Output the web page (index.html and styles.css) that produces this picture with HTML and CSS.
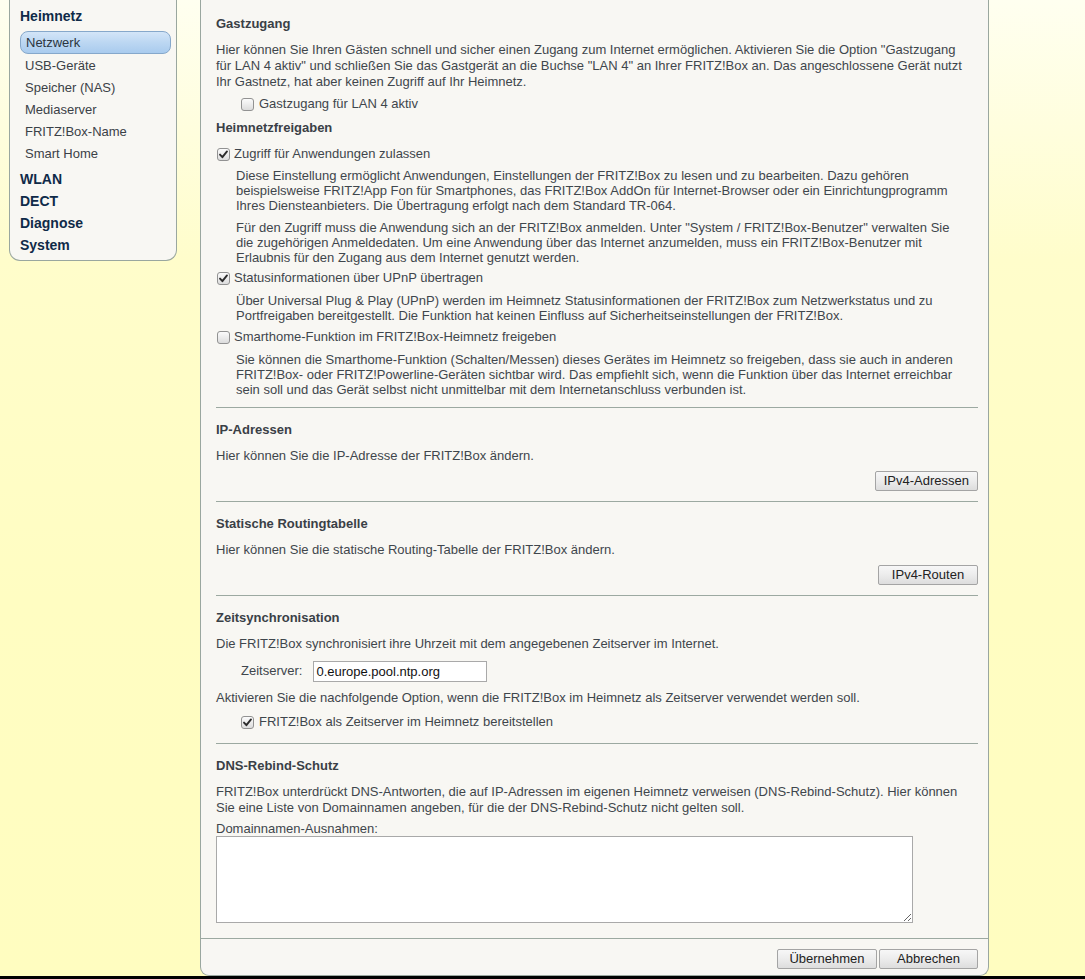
FILE: index.html
```html
<!DOCTYPE html>
<html lang="de">
<head>
<meta charset="utf-8">
<title>Heimnetz – Netzwerk</title>
<link rel="stylesheet" href="styles.css">
</head>
<body>
<div class="page">
  <nav class="sidebar">
    <div class="nav-top">Heimnetz</div>
    <ul class="nav-sub">
      <li class="active">Netzwerk</li>
      <li>USB-Geräte</li>
      <li>Speicher (NAS)</li>
      <li>Mediaserver</li>
      <li>FRITZ!Box-Name</li>
      <li>Smart Home</li>
    </ul>
    <div class="nav-top">WLAN</div>
    <div class="nav-top">DECT</div>
    <div class="nav-top">Diagnose</div>
    <div class="nav-top">System</div>
  </nav>

  <main class="main">
    <div class="content">
      <section class="sec first">
        <h2>Gastzugang</h2>
        <p class="txt">Hier können Sie Ihren Gästen schnell und sicher einen Zugang zum Internet ermöglichen. Aktivieren Sie die Option "Gastzugang für LAN 4 aktiv" und schließen Sie das Gastgerät an die Buchse "LAN 4" an Ihrer FRITZ!Box an. Das angeschlossene Gerät nutzt Ihr Gastnetz, hat aber keinen Zugriff auf Ihr Heimnetz.</p>
        <label class="cb-row indent gap6"><span class="cb"></span>Gastzugang für LAN 4 aktiv</label>

        <h2 class="h-sub">Heimnetzfreigaben</h2>
        <label class="cb-row gap10"><span class="cb"><svg viewBox="0 0 13 13" width="13" height="13"><path d="M3 6.6 L5.4 9.2 L10 3.4" fill="none" stroke="#2b2b2b" stroke-width="1.9" stroke-linecap="round" stroke-linejoin="round"/></svg></span>Zugriff für Anwendungen zulassen</label>
        <p class="itxt gap6">Diese Einstellung ermöglicht Anwendungen, Einstellungen der FRITZ!Box zu lesen und zu bearbeiten. Dazu gehören beispielsweise FRITZ!App Fon für Smartphones, das FRITZ!Box AddOn für Internet-Browser oder ein Einrichtungprogramm Ihres Diensteanbieters. Die Übertragung erfolgt nach dem Standard TR-064.</p>
        <p class="itxt gap7">Für den Zugriff muss die Anwendung sich an der FRITZ!Box anmelden. Unter "System / FRITZ!Box-Benutzer" verwalten Sie die zugehörigen Anmeldedaten. Um eine Anwendung über das Internet anzumelden, muss ein FRITZ!Box-Benutzer mit Erlaubnis für den Zugang aus dem Internet genutzt werden.</p>
        <label class="cb-row gap5"><span class="cb"><svg viewBox="0 0 13 13" width="13" height="13"><path d="M3 6.6 L5.4 9.2 L10 3.4" fill="none" stroke="#2b2b2b" stroke-width="1.9" stroke-linecap="round" stroke-linejoin="round"/></svg></span>Statusinformationen über UPnP übertragen</label>
        <p class="itxt gap7">Über Universal Plug &amp; Play (UPnP) werden im Heimnetz Statusinformationen der FRITZ!Box zum Netzwerkstatus und zu Portfreigaben bereitgestellt. Die Funktion hat keinen Einfluss auf Sicherheitseinstellungen der FRITZ!Box.</p>
        <label class="cb-row gap6"><span class="cb"></span>Smarthome-Funktion im FRITZ!Box-Heimnetz freigeben</label>
        <p class="itxt gap7">Sie können die Smarthome-Funktion (Schalten/Messen) dieses Gerätes im Heimnetz so freigeben, dass sie auch in anderen FRITZ!Box- oder FRITZ!Powerline-Geräten sichtbar wird. Das empfiehlt sich, wenn die Funktion über das Internet erreichbar sein soll und das Gerät selbst nicht unmittelbar mit dem Internetanschluss verbunden ist.</p>
      </section>

      <section class="sec">
        <h2>IP-Adressen</h2>
        <p class="txt">Hier können Sie die IP-Adresse der FRITZ!Box ändern.</p>
        <div class="btn-row"><button class="btn" type="button">IPv4-Adressen</button></div>
      </section>

      <section class="sec">
        <h2>Statische Routingtabelle</h2>
        <p class="txt">Hier können Sie die statische Routing-Tabelle der FRITZ!Box ändern.</p>
        <div class="btn-row"><button class="btn" type="button">IPv4-Routen</button></div>
      </section>

      <section class="sec sec-time">
        <h2>Zeitsynchronisation</h2>
        <p class="txt">Die FRITZ!Box synchronisiert ihre Uhrzeit mit dem angegebenen Zeitserver im Internet.</p>
        <div class="field-row"><label class="field-label" for="ntp">Zeitserver:</label><input id="ntp" class="field" type="text" value="0.europe.pool.ntp.org"></div>
        <p class="txt gap9">Aktivieren Sie die nachfolgende Option, wenn die FRITZ!Box im Heimnetz als Zeitserver verwendet werden soll.</p>
        <label class="cb-row indent gap8"><span class="cb"><svg viewBox="0 0 13 13" width="13" height="13"><path d="M3 6.6 L5.4 9.2 L10 3.4" fill="none" stroke="#2b2b2b" stroke-width="1.9" stroke-linecap="round" stroke-linejoin="round"/></svg></span>FRITZ!Box als Zeitserver im Heimnetz bereitstellen</label>
      </section>

      <section class="sec sec-dns">
        <h2>DNS-Rebind-Schutz</h2>
        <p class="txt">FRITZ!Box unterdrückt DNS-Antworten, die auf IP-Adressen im eigenen Heimnetz verweisen (DNS-Rebind-Schutz). Hier können Sie eine Liste von Domainnamen angeben, für die der DNS-Rebind-Schutz nicht gelten soll.</p>
        <label class="area-label" for="dns">Domainnamen-Ausnahmen:</label>
        <textarea id="dns" class="area"></textarea>
      </section>
    </div>
    <div class="footer">
      <button class="btn" type="button">Übernehmen</button>
      <button class="btn" type="button">Abbrechen</button>
    </div>
  </main>
</div>
<div class="screen-edge"></div>
</body>
</html>
```

FILE: styles.css
```css
html, body {
  margin: 0;
  padding: 0;
}

body {
  font-family: "Liberation Sans", Arial, sans-serif;
  font-size: 13px;
  line-height: 16px;
  color: #3f464c;
  background: linear-gradient(to bottom, #fffff0 0, #fffdcb 260px, #fffdc2 600px, #fffdc0 100%);
  min-height: 979px;
  overflow: hidden;
}

.page {
  display: flex;
  align-items: flex-start;
  padding-left: 9px;
  gap: 23px;
}

/* ---------- sidebar ---------- */
.sidebar {
  width: 168px;
  box-sizing: border-box;
  background: #f8f7f3;
  border: 1px solid #9aa79f;
  border-top: 0;
  border-radius: 0 0 11px 11px;
  padding: 5px 5px 4px 10px;
}

.nav-top {
  font-size: 14px;
  font-weight: bold;
  line-height: 22px;
  color: #0f2a48;
}

.nav-sub {
  list-style: none;
  margin: 4px 0;
  padding: 0;
}

.nav-sub li {
  height: 22px;
  line-height: 23px;
  padding-left: 5px;
  color: #3b4147;
}

.nav-sub li.active {
  height: 23px;
  box-sizing: border-box;
  line-height: 21px;
  border: 1px solid #86a8cb;
  border-radius: 8px;
  background: linear-gradient(to bottom, #d3e5f8 0, #bcd7f2 50%, #a9cbee 100%);
  color: #2a3540;
}

/* ---------- main panel ---------- */
.main {
  width: 789px;
  box-sizing: border-box;
  background: #f8f7f3;
  border: 1px solid #9aa79f;
  border-top: 0;
  border-radius: 0 0 9px 9px;
}

.content {
  padding: 0 10px 0 15px;
}

.sec {
  padding: 14px 0 10px;
}

.sec + .sec {
  border-top: 1px solid #9ca9a1;
}

.sec.first {
  padding-top: 16px;
}

.sec-time {
  padding-bottom: 13px;
}

.sec-dns {
  padding-bottom: 15px;
}

h2 {
  margin: 0;
  font-size: 13px;
  line-height: 16px;
  font-weight: bold;
  color: #3a4046;
}

.h-sub {
  margin-top: 8px;
}

.txt {
  margin: 10px 0 0;
  padding-right: 14px;
}

.itxt {
  margin: 7px 0 0;
  padding-left: 20px;
  padding-right: 14px;
  line-height: 15px;
}

.gap5 { margin-top: 5px; }
.gap6 { margin-top: 6px; }
.gap7 { margin-top: 7px; }
.gap8 { margin-top: 8px; }
.gap9 { margin-top: 9px; }
.gap10 { margin-top: 10px; }

.cb-row {
  display: flex;
  align-items: center;
  gap: 4px;
  height: 16px;
  padding-left: 1px;
}

.cb-row.indent {
  padding-left: 25px;
  gap: 5px;
}

.cb {
  flex: none;
  width: 13px;
  height: 13px;
  box-sizing: border-box;
  border: 1px solid #929292;
  border-radius: 3px;
  background: linear-gradient(to bottom, #fbfbfb 0, #ececec 50%, #dcdcdc 100%);
  position: relative;
}

.cb svg {
  position: absolute;
  left: -1px;
  top: -1px;
}

.btn-row {
  display: flex;
  justify-content: flex-end;
  margin-top: 7px;
}

.btn {
  height: 20px;
  min-width: 100px;
  box-sizing: border-box;
  padding: 0 8px;
  margin: 0;
  font-family: "Liberation Sans", Arial, sans-serif;
  font-size: 13px;
  line-height: 18px;
  color: #222;
  border: 1px solid #a4a4a4;
  border-radius: 2px;
  background: linear-gradient(to bottom, #f7f7f7 0, #ececec 50%, #dddddd 100%);
}

.field-row {
  display: flex;
  align-items: center;
  height: 20px;
  margin-top: 9px;
  padding-left: 25px;
}

.field-label {
  margin-right: 11px;
}

.field {
  width: 174px;
  height: 21px;
  box-sizing: border-box;
  margin: 0;
  padding: 0 2px;
  border: 1px solid #a9a9a9;
  background: #fff;
  font-family: "Liberation Sans", Arial, sans-serif;
  font-size: 13px;
  color: #111;
}

.area-label {
  display: block;
  margin-top: 5px;
  line-height: 15px;
}

.area {
  display: block;
  width: 697px;
  height: 87px;
  box-sizing: border-box;
  margin: 0;
  border: 1px solid #a9a9a9;
  background: #fff;
  font-family: "Liberation Sans", Arial, sans-serif;
  font-size: 13px;
}

.footer {
  display: flex;
  justify-content: flex-end;
  gap: 2px;
  border-top: 1px solid #9ca9a1;
  padding: 10px 10px 6px;
}

.footer .btn {
  min-width: 99px;
}

.footer .btn:first-child {
  min-width: 100px;
}

.screen-edge {
  height: 3px;
  background: #000;
}
```
